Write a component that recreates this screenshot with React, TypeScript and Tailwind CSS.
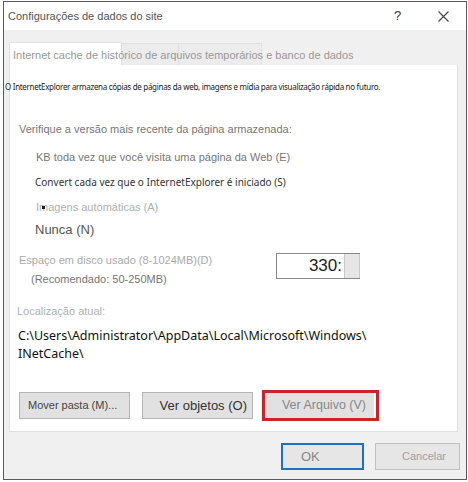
export default function App() {
  const sans = "font-['Liberation_Sans',Arial,sans-serif]";
  const noto = "font-['Noto_Sans',sans-serif]";

  return (
    <div className={`w-[468px] h-[482px] bg-white overflow-hidden ${sans}`}>
      <div className="ml-[3px] mt-[1px] w-[464px] h-[479px] border border-[#5a5a5a] bg-[#f0f0f0] flex flex-col">
        {/* title bar */}
        <div className="h-[28px] bg-white flex items-center pl-[4px] shrink-0">
          <span className="text-[11px] text-[#555]">Configurações de dados do site</span>
          <span className="ml-auto text-[13px] text-[#333] w-[10px] mr-[34px]">?</span>
          <svg width="11" height="11" viewBox="0 0 11 11" className="mr-[17px]">
            <path d="M0.5 0.5 L10.5 10.5 M10.5 0.5 L0.5 10.5" stroke="#444" strokeWidth="1.1" />
          </svg>
        </div>

        {/* body */}
        <div className="flex-1 pl-[5px] pr-[8px] pt-[12px]">
          {/* tabs */}
          <div className="flex h-[23px] items-end">
            <div className="relative w-[112px] h-[23px] bg-white border-t border-l border-[#e2e2e2] shrink-0">
              <span className="absolute left-[3px] top-[4px] whitespace-nowrap text-[11px] text-[#999]">
                Internet cache de histórico de arquivos temporários e banco de dados
              </span>
            </div>
            <div className="w-[58px] h-[22px] border border-b-0 border-[#e0e0e0] bg-[#ececec]" />
            <div className="w-[83px] h-[22px] border border-b-0 border-l-0 border-[#e0e0e0] bg-[#ececec]" />
          </div>

          {/* panel */}
          <div className="h-[367px] bg-white border border-[#e0e0e0] border-t-0 flex flex-col pl-[9px]">
            <div className={`mt-[16px] -ml-[14px] h-[12px] leading-[12px] whitespace-nowrap text-[8px] tracking-[-0.3px] text-[#222] ${noto}`}>
              O InternetExplorer armazena cópias de páginas da web, imagens e mídia para visualização rápida no futuro.
            </div>

            <div className="mt-[28px] h-[16px] leading-[16px] text-[11px] text-[#777]">
              Verifique a versão mais recente da página armazenada:
            </div>
            <div className="mt-[12px] h-[16px] leading-[16px] pl-[17px] text-[11px] text-[#777]">
              KB toda vez que você visita uma página da Web (E)
            </div>
            <div className={`mt-[9px] h-[16px] leading-[16px] pl-[16px] text-[10px] text-[#333] ${noto}`}>
              Convert cada vez que o InternetExplorer é iniciado (S)
            </div>
            <div className="mt-[9px] h-[16px] leading-[16px] pl-[17px] text-[11px] text-[#b0b0b0] relative">
              Imagens automáticas (A)
              <span className="absolute left-[23px] top-[7px] w-[3px] h-[3px] bg-[#222]" />
            </div>
            <div className="mt-[6px] h-[18px] leading-[18px] pl-[16px] text-[13px] text-[#555]">
              Nunca (N)
            </div>

            {/* disk space */}
            <div className="mt-[13px] h-[36px] flex">
              <div className="flex flex-col">
                <div className="h-[16px] leading-[16px] text-[11px] text-[#aaa]">Espaço em disco usado (8-1024MB)(D)</div>
                <div className="mt-[3px] h-[16px] leading-[16px] pl-[12px] text-[11px] text-[#777]">(Recomendado: 50-250MB)</div>
              </div>
              <div className="ml-auto mr-[97px] mt-[1px] w-[84px] h-[26px] border border-[#888] border-r-0 flex bg-white">
                <div className="flex-1 text-right pr-[2px] text-[17px] leading-[24px] text-[#222]">330:</div>
                <div className="w-[16px] h-full bg-[#e6e6e6] border-l border-r border-[#c8c8c8]" />
              </div>
            </div>

            <div className="mt-[15px] -ml-[2px] h-[16px] leading-[16px] text-[11px] text-[#b0b0b0]">Localização atual:</div>
            <div className={`mt-[8px] -ml-[1px] text-[12.5px] leading-[18px] text-[#111] ${noto}`}>
              C:\Users\Administrator\AppData\Local\Microsoft\Windows\
              <br />
              INetCache\
            </div>

            {/* buttons */}
            <div className="mt-[27px] flex items-center whitespace-nowrap">
              <button className="w-[111px] h-[27px] bg-[#e1e1e1] border border-[#b5b5b5] text-[11px] text-[#444] text-left pl-[8px]">
                Mover pasta (M)...
              </button>
              <button className="ml-[12px] w-[111px] h-[27px] bg-[#e1e1e1] border border-[#b5b5b5] text-[13px] text-[#333] text-right pr-[5px]">
                Ver objetos (O)
              </button>
              <div className="ml-[9px] w-[117px] h-[31px] border-[3px] border-[#d0202c] flex items-center">
                <div className="w-[109px] h-[25px] bg-[#e1e1e1] text-[12.5px] text-[#888] text-right pr-[8px] leading-[25px]">
                  Ver Arquivo (V)
                </div>
              </div>
            </div>
          </div>

          {/* footer */}
          <div className="mt-[11px] flex justify-end whitespace-nowrap">
            <button className="w-[83px] h-[27px] border-2 border-[#1a72c4] bg-[#e6e6e6] text-[13px] text-[#888] text-left pl-[18px]">
              OK
            </button>
            <button className="ml-[11px] w-[85px] h-[27px] border border-[#c0c0c0] bg-[#e6e6e6] text-[11px] text-[#a0a0a0] text-right pr-[13px] -mr-[2px]">
              Cancelar
            </button>
          </div>
        </div>
      </div>
    </div>
  );
}
